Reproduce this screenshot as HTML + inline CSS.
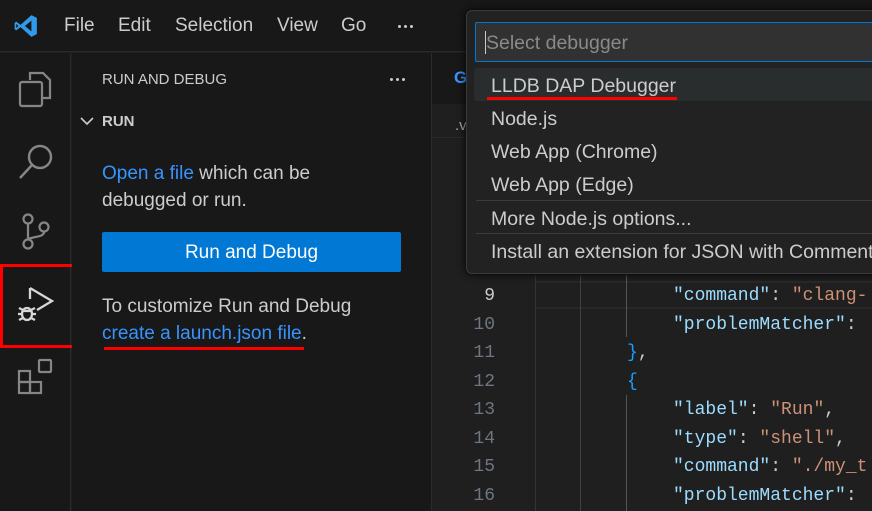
<!DOCTYPE html>
<html><head><style>
*{margin:0;padding:0;box-sizing:border-box}
body{width:872px;height:511px;overflow:hidden;background:#1f1f1f;font-family:"Liberation Sans",sans-serif;position:relative;color:#ccc}
.a{position:absolute}
.menu span{position:absolute;top:15px;font-size:19px;color:#ccc}
.ln{position:absolute;right:377px;color:#6e7681;font-family:"Liberation Mono",monospace;font-size:18px}
.code{position:absolute;font-family:"Liberation Mono",monospace;font-size:18px;white-space:pre}
.k{color:#9cdcfe}.s{color:#ce9178}.p{color:#ccc}.b{color:#179fff}
.item{position:absolute;left:491px;font-size:19.5px;color:#ccc}
.dots{position:absolute;display:flex;gap:3px}
.dots i{width:3px;height:3px;border-radius:50%;background:#ccc;display:block}
</style></head><body>
<div class="a" style="left:0;top:0;width:872px;height:52px;background:#181818;border-bottom:1px solid #2b2b2b"></div>
<svg class="a" style="left:13px;top:13px" width="26" height="26" viewBox="0 0 24 24"><path d="M17 2 L22 4.5 V19.5 L17 22 L7 13 L3 16 L1.5 15 V9 L3 8 L7 11 Z M17 7 L11 12 L17 17 Z M3 10 V14 L5 12 Z" fill="#2f9bea" fill-rule="evenodd"/></svg>
<div class="menu"><span style="left:64px">File</span><span style="left:118px">Edit</span><span style="left:175px">Selection</span><span style="left:277px">View</span><span style="left:341px">Go</span></div>
<div class="dots" style="left:398px;top:25px"><i></i><i></i><i></i></div>
<div class="a" style="left:0;top:53px;width:71px;height:458px;background:#181818;border-right:1px solid #2b2b2b"></div>
<svg class="a" style="left:18px;top:70px" width="34" height="38" viewBox="0 0 34 38" fill="none" stroke="#868686" stroke-width="2.2"><path d="M12 10 V3 H25 L32 10 V28 H24"/><rect x="2" y="12" width="22" height="24" rx="2"/></svg>
<svg class="a" style="left:18px;top:142px" width="38" height="38" viewBox="0 0 38 38" fill="none" stroke="#868686" stroke-width="2.4"><circle cx="22" cy="15" r="11"/><path d="M14 23 L2 36"/></svg>
<svg class="a" style="left:20px;top:212px" width="32" height="40" viewBox="0 0 32 40" fill="none" stroke="#868686" stroke-width="2.2"><circle cx="8" cy="7" r="4.5"/><circle cx="8" cy="32" r="4.5"/><circle cx="24" cy="15" r="4.5"/><path d="M8 12 V27 M24 20 C24 26 10 24 8 28"/></svg>
<div class="a" style="left:0;top:268px;width:3px;height:72px;background:#0078d4"></div>
<svg class="a" style="left:16px;top:285px" width="40" height="40" viewBox="0 0 40 40" fill="none" stroke="#d7d7d7" stroke-width="2.3"><path d="M14 3 V14 M14 3 L36 16 L21 25"/><ellipse cx="11" cy="29" rx="5" ry="6"/><path d="M3 23 L7 25 M19 23 L15 25 M2 29 H6 M16 29 H20 M3 35 L7 33 M19 35 L15 33 M6 26 H16"/></svg>
<div class="a" style="left:0;top:264px;width:80px;height:84px;border:3px solid #f00"></div>
<svg class="a" style="left:17px;top:358px" width="40" height="40" viewBox="0 0 40 40" fill="none" stroke="#868686" stroke-width="2.2"><rect x="2" y="13" width="11" height="11"/><rect x="2" y="24" width="11" height="11"/><rect x="13" y="24" width="11" height="11"/><rect x="22" y="2" width="12" height="12" rx="1"/></svg>
<div class="a" style="left:72px;top:53px;width:360px;height:458px;background:#181818;border-right:1px solid #2b2b2b"></div>
<div class="a" style="left:102px;top:71px;font-size:15px;color:#ccc">RUN AND DEBUG</div>
<div class="dots" style="left:390px;top:78px"><i></i><i></i><i></i></div>
<svg class="a" style="left:80px;top:116px" width="14" height="10" viewBox="0 0 14 10" fill="none" stroke="#ccc" stroke-width="1.6"><path d="M1 2 L7 8 L13 2"/></svg>
<div class="a" style="left:102px;top:113px;font-size:15px;font-weight:bold;color:#ccc">RUN</div>
<div class="a" style="left:102px;top:160px;font-size:19px;line-height:27px;color:#ccc"><span style="color:#3794ff">Open a file</span> which can be<br>debugged or run.</div>
<div class="a" style="left:102px;top:232px;width:299px;height:40px;background:#0078d4;border-radius:2px;color:#fff;font-size:19px;text-align:center;line-height:42px">Run and Debug</div>
<div class="a" style="left:102px;top:293px;font-size:19px;line-height:27px;color:#ccc">To customize Run and Debug<br><span style="color:#3794ff">create a launch.json file</span>.</div>
<div class="a" style="left:104px;top:347px;width:200px;height:3px;background:#f00"></div>
<div class="a" style="left:432px;top:53px;width:440px;height:51px;background:#181818"></div>
<div class="a" style="left:454px;top:68px;font-size:17px;font-weight:bold;color:#3794ff">G</div>
<div class="a" style="left:455px;top:117px;font-size:15px;color:#aaa">.v</div>
<div class="a" style="left:432px;top:137px;width:440px;height:1px;background:#2b2b2b"></div>
<div class="a" style="left:535px;top:281px;width:337px;height:28px;border-top:2px solid #282828;border-bottom:2px solid #282828"></div>
<div class="a" style="left:535px;top:275px;width:1px;height:236px;background:#333"></div>
<div class="a" style="left:580px;top:275px;width:1px;height:236px;background:#404040"></div>
<div class="a" style="left:626px;top:275px;width:1px;height:62px;background:#555"></div>
<div class="a" style="left:626px;top:395px;width:1px;height:116px;background:#555"></div>
<div class="ln" style="top:286px;color:#ccc">9</div>
<div class="ln" style="top:315px">10</div>
<div class="ln" style="top:343px">11</div>
<div class="ln" style="top:372px">12</div>
<div class="ln" style="top:400px">13</div>
<div class="ln" style="top:429px">14</div>
<div class="ln" style="top:457px">15</div>
<div class="ln" style="top:486px">16</div>
<div class="code" style="left:673px;top:286px"><span class="k">"command"</span><span class="p">: </span><span class="s">"clang-</span></div>
<div class="code" style="left:673px;top:315px"><span class="k">"problemMatcher"</span><span class="p">:</span></div>
<div class="code" style="left:627px;top:343px"><span class="b">}</span><span class="p">,</span></div>
<div class="code" style="left:627px;top:372px"><span class="b">{</span></div>
<div class="code" style="left:673px;top:400px"><span class="k">"label"</span><span class="p">: </span><span class="s">"Run"</span><span class="p">,</span></div>
<div class="code" style="left:673px;top:429px"><span class="k">"type"</span><span class="p">: </span><span class="s">"shell"</span><span class="p">,</span></div>
<div class="code" style="left:673px;top:457px"><span class="k">"command"</span><span class="p">: </span><span class="s">"./my_t</span></div>
<div class="code" style="left:673px;top:486px"><span class="k">"problemMatcher"</span><span class="p">:</span></div>
<div class="a" style="left:466px;top:10px;width:420px;height:264px;background:#222222;border:1px solid #3a3a3a;border-radius:6px;box-shadow:0 0 8px #000"></div>
<div class="a" style="left:475px;top:22px;width:410px;height:40px;background:#313131;border:1px solid #0078d4;border-radius:2px"></div>
<div class="a" style="left:485px;top:31px;width:1px;height:23px;background:#ccc"></div>
<div class="a" style="left:486px;top:32px;font-size:19.5px;color:#8a8a8a">Select debugger</div>
<div class="a" style="left:474px;top:68px;width:400px;height:33px;background:#2a2d2e;border-radius:3px"></div>
<div class="item" style="top:75px">LLDB DAP Debugger</div>
<div class="a" style="left:487px;top:97px;width:190px;height:3px;background:#f00"></div>
<div class="item" style="top:108px">Node.js</div>
<div class="item" style="top:141px">Web App (Chrome)</div>
<div class="item" style="top:174px">Web App (Edge)</div>
<div class="a" style="left:476px;top:200px;width:396px;height:1px;background:#3c3c3c"></div>
<div class="item" style="top:208px">More Node.js options...</div>
<div class="a" style="left:476px;top:233px;width:396px;height:1px;background:#3c3c3c"></div>
<div class="item" style="top:241px;white-space:nowrap">Install an extension for JSON with Comments</div>
</body></html>
